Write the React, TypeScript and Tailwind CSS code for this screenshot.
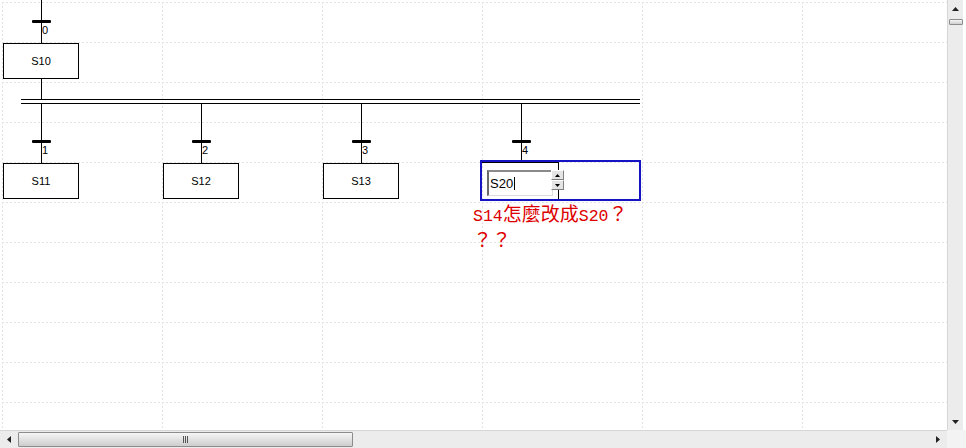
import React from 'react';

type Step = { name: string; x: number; y: number };
type Trans = { label: string; cx: number; y: number };

const steps: Step[] = [
  { name: 'S10', x: 3, y: 43 },
  { name: 'S11', x: 3, y: 163 },
  { name: 'S12', x: 163, y: 163 },
  { name: 'S13', x: 323, y: 163 },
];

const transitions: Trans[] = [
  { label: '0', cx: 41, y: 20 },
  { label: '1', cx: 41, y: 140 },
  { label: '2', cx: 201, y: 140 },
  { label: '3', cx: 361, y: 140 },
  { label: '4', cx: 521, y: 140 },
];

const Arrow = ({ dir }: { dir: 'up' | 'down' | 'left' | 'right' }) => {
  const pts = {
    up: '0,4 7,4 3.5,0',
    down: '0,0 7,0 3.5,4',
    left: '4,0 4,7 0,3.5',
    right: '0,0 0,7 4,3.5',
  }[dir];
  const w = dir === 'up' || dir === 'down' ? 7 : 4;
  const h = dir === 'up' || dir === 'down' ? 4 : 7;
  return (
    <svg width={w} height={h} viewBox={`0 0 ${w} ${h}`}>
      <polygon points={pts} fill="#222" />
    </svg>
  );
};

const Canvas = () => (
  <div className="relative flex-1 overflow-hidden bg-white">
    <svg className="absolute inset-0" width="947" height="430">
      <defs>
        <pattern id="grid" x="2" y="2" width="160" height="40" patternUnits="userSpaceOnUse">
          <path d="M0 0.5 H160" stroke="#e3e3e3" strokeDasharray="2 2" />
          <path d="M0.5 0 V40" stroke="#e3e3e3" strokeDasharray="2 2" />
        </pattern>
      </defs>
      <rect width="947" height="430" fill="url(#grid)" />
      <g stroke="#000" strokeWidth="1" fill="none">
        <path d="M41.5 0 V43" />
        <path d="M41.5 79 V99" />
        <path d="M21 99.5 H640" />
        <path d="M21 103.5 H640" />
        <path d="M41.5 104 V163" />
        <path d="M201.5 104 V163" />
        <path d="M361.5 104 V163" />
        <path d="M521.5 104 V162" />
      </g>
    </svg>

    {transitions.map((t) => (
      <React.Fragment key={t.label}>
        <div
          className="absolute h-[3px] w-[19px] rounded-[1px] bg-black"
          style={{ left: t.cx - 9, top: t.y }}
        />
        <div
          className="absolute text-[11px] leading-none text-black"
          style={{ left: t.cx + 1, top: t.y + 5 }}
        >
          {t.label}
        </div>
      </React.Fragment>
    ))}

    {steps.map((s) => (
      <div
        key={s.name}
        className="absolute flex h-[36px] w-[76px] items-center justify-center border border-black bg-white text-[11px] text-black"
        style={{ left: s.x, top: s.y }}
      >
        {s.name}
      </div>
    ))}

    {/* step being renamed */}
    <div className="absolute left-[482px] top-[162px] h-[37px] w-[77px] border-t border-r border-black" />
    <div className="absolute left-[480px] top-[160px] h-[41px] w-[161px] border-2 border-[#1414c4]" />
    <div className="absolute left-[487px] top-[170px] flex h-[26px] w-[66px] items-center border-t-2 border-l-2 border-b border-r border-t-[#8a8a8a] border-l-[#6a6a6a] border-b-[#dcdcdc] border-r-[#dcdcdc] bg-white pl-[1px] text-[13px] text-black">
      S20
      <span className="ml-[1px] h-[13px] w-px bg-black" />
    </div>
    <div className="absolute left-[551px] top-[170px] flex h-[20px] w-[13px] flex-col">
      <div className="flex h-[10px] items-center justify-center border border-t-white border-l-white border-b-[#808080] border-r-[#808080] bg-[#e4e4e4]">
        <svg width="5" height="3" viewBox="0 0 5 3"><polygon points="0,3 5,3 2.5,0" fill="#000" /></svg>
      </div>
      <div className="flex h-[10px] items-center justify-center border border-t-white border-l-white border-b-[#808080] border-r-[#808080] bg-[#e4e4e4]">
        <svg width="5" height="3" viewBox="0 0 5 3"><polygon points="0,0 5,0 2.5,3" fill="#000" /></svg>
      </div>
    </div>

    <div className="absolute left-[473px] top-[202px] font-['Liberation_Mono','Noto_Sans_CJK_TC',monospace] text-[16.5px] leading-[22px] text-[#dd0000]">
      S14
      <span className="font-['Noto_Sans_CJK_TC',sans-serif] text-[19px]">怎麼改成</span>
      S20
      <span className="font-['Noto_Sans_CJK_TC',sans-serif] text-[19px]">？</span>
      <br />
      <span className="font-['Noto_Sans_CJK_TC',sans-serif] text-[19px]">？？</span>
    </div>
  </div>
);

const VScroll = () => (
  <div className="flex w-[19px] flex-col border-r-[3px] border-white">
    <div className="flex flex-1 flex-col items-center border-l border-[#d6d6d6] bg-[#ececec]">
      <div className="flex h-[17px] items-center justify-center pt-[0px]">
        <Arrow dir="up" />
      </div>
      <div className="mt-[2px] h-[6px] w-[14px] rounded-[1px] border border-[#8c8c8c] bg-gradient-to-b from-[#f6f6f6] to-[#cfcfcf]" />
      <div className="flex-1" />
      <div className="flex h-[17px] items-center justify-center">
        <Arrow dir="down" />
      </div>
    </div>
  </div>
);

const HScroll = () => (
  <div className="flex flex-1 items-center border-t border-[#d6d6d6] bg-[#ececec] pb-[1px]">
    <div className="flex w-[18px] items-center justify-center">
      <Arrow dir="left" />
    </div>
    <div className="flex h-[15px] w-[335px] items-center justify-center rounded-[1px] border border-[#8c8c8c] bg-gradient-to-b from-[#f6f6f6] to-[#cdcdcd]">
      <div className="flex gap-[1px]">
        <span className="h-[7px] w-px bg-[#555]" />
        <span className="h-[7px] w-px bg-[#555]" />
        <span className="h-[7px] w-px bg-[#555]" />
      </div>
    </div>
    <div className="flex-1" />
    <div className="flex w-[18px] items-center justify-center">
      <Arrow dir="right" />
    </div>
  </div>
);

export default function App() {
  return (
    <div className="flex h-[448px] w-[966px] flex-col overflow-hidden bg-white font-['Liberation_Sans',Arial,sans-serif]">
      <div className="flex min-h-0 flex-1">
        <Canvas />
        <VScroll />
      </div>
      <div className="flex h-[18px]">
        <HScroll />
        <div className="w-[19px] bg-[#f3f3f3]" />
      </div>
    </div>
  );
}
